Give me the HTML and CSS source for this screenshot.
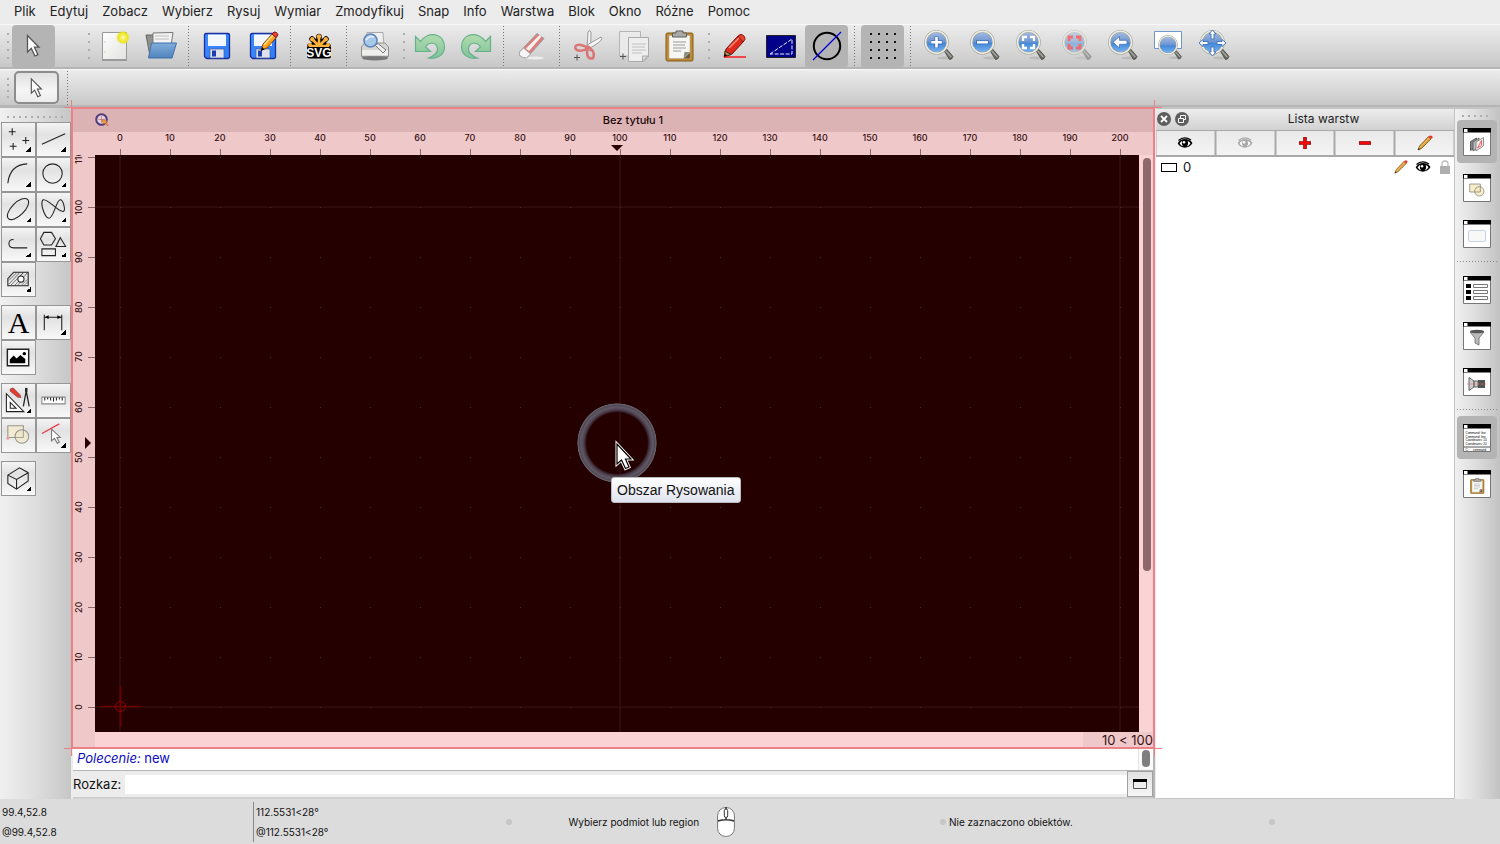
FILE: index.html
```html
<!DOCTYPE html>
<html lang="pl">
<head>
<meta charset="utf-8">
<title>Bez tytułu 1</title>
<link rel="stylesheet" href="styles.css">
</head>
<body>
<svg class="defs" aria-hidden="true">
  <defs>
    <linearGradient id="lens" x1="0" y1="0" x2="0" y2="1"><stop offset="0" stop-color="#a9bfe2"/><stop offset=".48" stop-color="#6d95d0"/><stop offset=".55" stop-color="#4488da"/><stop offset="1" stop-color="#7db8f2"/></linearGradient>
    <linearGradient id="disk" x1="0" y1="0" x2="1" y2="1"><stop offset="0" stop-color="#3f8cff"/><stop offset="1" stop-color="#2f7df2"/></linearGradient>
    <linearGradient id="folder" x1="0" y1="0" x2="0" y2="1"><stop offset="0" stop-color="#82aedb"/><stop offset="1" stop-color="#4f84bd"/></linearGradient>
    <linearGradient id="green" x1="0" y1="0" x2="0" y2="1"><stop offset="0" stop-color="#b2dcae"/><stop offset="1" stop-color="#7fc39b"/></linearGradient>
    <linearGradient id="paper" x1="0" y1="0" x2="1" y2="1"><stop offset="0" stop-color="#ffffff"/><stop offset="1" stop-color="#e2e2e0"/></linearGradient>
    <radialGradient id="glow"><stop offset="0" stop-color="#fffde0"/><stop offset=".3" stop-color="#f8f060"/><stop offset=".7" stop-color="#ece41c"/><stop offset="1" stop-color="#e8e030" stop-opacity="0"/></radialGradient>
    <symbol id="arrow" viewBox="2 0 32 32"><path d="M11.500 5.500V22l3.800-3.600 3.600 7.600 3-1.400-3.500-7.400h4.600z" fill="#fff" stroke="#555" stroke-width="1.300"/></symbol>
    <symbol id="glass" viewBox="0 0 32 32">
      <ellipse cx="22" cy="28" rx="8" ry="1.500" fill="#000" opacity=".1"/>
      <path d="M21 20.500l2.500-1.500 6.500 7.500-1.500 2.500-2 .5z" fill="#666862" stroke="#45473f" stroke-width=".8"/>
      <path d="M22.800 21l5.500 6" stroke="#a7a9a2" stroke-width="1.300"/>
      <circle cx="13.500" cy="12.300" r="11" fill="url(#lens)" stroke="#a2a39b" stroke-width="2.600"/>
      <circle cx="13.500" cy="12.300" r="11" fill="none" stroke="#edeee3" stroke-width="1.400"/>
    </symbol>
    <symbol id="eye" viewBox="0 0 16 12"><path d="M.7 6.300C3 1 12 .2 15.500 6 12.500 12 3.500 12.300.7 6.300z" fill="currentColor"/><path d="M2.600 6.500Q4 4.500 5.300 3.800 4 7.500 6.500 9.600 4 8.800 2.600 6.500zM13.500 6.300Q12 9 9.800 9.700 12 7 10.700 3.900 12.600 4.700 13.500 6.300z" fill="#fff"/><circle cx="7" cy="5.200" r="1.300" fill="#fff"/><path d="M1.500 3.500Q7-1.500 14 3" fill="none" stroke="currentColor" stroke-width="1.200"/></symbol>
    <symbol id="pencil" viewBox="0 0 16 16"><path d="M1 15l1.500-4L11.500 1.500l2.500 2.500-9.500 9.500z" fill="#d99836" stroke="#7b5a20" stroke-width=".8"/><path d="M3 12.500l9-9.300" stroke="#f5cb77" stroke-width="1"/><path d="M11.300 1.800Q13.500-.5 15 1t-1 3z" fill="#e83a30"/><path d="M1 15l.7-2 1.300 1.300z" fill="#222"/></symbol>
    <symbol id="clip" viewBox="0 0 32 32"><rect x="3" y="3" width="27" height="28" rx="1.500" fill="#c28a2c" stroke="#80591c"/><path d="M6 5.500h21v23H6z" fill="#f6f6f3" stroke="#aaa" stroke-width=".6"/><path d="M20.500 28.500l6.500-6.500h-5.500z" fill="#8c8c86"/><path d="M27 22.500v6h-6.500z" fill="#6f5a32"/><path d="M10 12h13M10 15h12M10 18h13M10 21h8" stroke="#b9b9b9" stroke-width="1.300"/><path d="M13 3V1h7v2h3.500v4h-14V3z" fill="#a9aaa3" stroke="#5f615b"/></symbol>
    <symbol id="win" viewBox="0 0 28 28"><path d="M.5.5h27v27H.5z" fill="#fff" stroke="#777"/><path d="M0 0h28v4.500H0z"/><path d="M1 1h3.500v3H1z" fill="#fff"/></symbol>
    <symbol id="shapes" viewBox="0 0 24 20"><path d="M1 1h16v12H1z" fill="#f6eeca" stroke="#777169"/><circle cx="15.500" cy="12" r="7" fill="#f4e9bd" fill-opacity=".8" stroke="#777169"/><path d="M17 5v8H9" fill="none" stroke="#777169" stroke-width=".8"/></symbol>
  </defs>
</svg>

<nav class="menu">
  <button>Plik</button><button>Edytuj</button><button>Zobacz</button><button>Wybierz</button><button>Rysuj</button><button>Wymiar</button><button>Zmodyfikuj</button><button>Snap</button><button>Info</button><button>Warstwa</button><button>Blok</button><button>Okno</button><button>Różne</button><button>Pomoc</button>
</nav>

<div class="toolbar">
  <i class="grip"></i>
  <button class="tool on" aria-label="Wskaźnik"><svg viewBox="0 0 32 32"><use href="#arrow" y="0" width="32" height="32"/></svg></button>
  <i class="grip apart"></i>
  <button class="tool" aria-label="Nowy"><svg viewBox="0 0 32 32"><path d="M3.500 2.500h24v27h-24z" fill="url(#paper)" stroke="#999"/><path d="M3 30.500h25" stroke="#777" opacity=".6"/><path d="M5.500 12h1M5.500 22h1" stroke="#aaa"/><circle cx="24" cy="7.500" r="7" fill="url(#glow)"/></svg></button>
  <button class="tool" aria-label="Otwórz"><svg viewBox="0 0 32 32"><path d="M1 5h8l2 2h14v19H5z" fill="#8f918c" stroke="#656762"/><path d="M8 3l20-.5-2 13H8z" fill="#f4f4f4" stroke="#777"/><path d="M10 6h14M10 9h14" stroke="#bbb"/><path d="M6.500 13h25l-4.500 15H3.500z" fill="url(#folder)" stroke="#3e71aa"/></svg></button>
  <i class="sep"></i>
  <button class="tool" aria-label="Zapisz"><svg viewBox="0 0 32 32"><path id="floppy" d="M5 3.500h22q1.500 0 1.500 1.500v22q0 1.500-1.500 1.500H5.500l-2-2V5q0-1.500 1.500-1.500z" fill="url(#disk)" stroke="#1b2f9e" stroke-width="1.300"/><path d="M7 4.500h18V16H7z" fill="#f3f8ff"/><path d="M9 19h14v9H9z" fill="#dfe2ea" stroke="#3c5aa8" stroke-width=".7"/><path d="M11 20.500h4v6h-4z" fill="#1c3fb0"/></svg></button>
  <button class="tool" aria-label="Zapisz jako"><svg viewBox="0 0 32 32"><use href="#floppy"/><path d="M7 4.500h18V16H7z" fill="#f3f8ff"/><path d="M9 19h14v9H9z" fill="#dfe2ea" stroke="#3c5aa8" stroke-width=".7"/><path d="M11 20.500h4v6h-4z" fill="#1c3fb0"/><path d="M14 20l2-6L26 3l4 3.500-10 11.500z" fill="#fba21e" stroke="#8a4510"/><path d="M17 15L27 4" stroke="#ffe28a" stroke-width="1.500"/><path d="M25 4l2-2q3-.5 4 3l-2 2.500z" fill="#e2492e" stroke="#812"/><path d="M14 21l1-4 2.500 2.500z"/></svg></button>
  <i class="sep"></i>
  <button class="tool" aria-label="Eksport SVG"><svg viewBox="0 0 32 32"><g stroke="#000" stroke-width="5.500" stroke-linecap="round"><path d="M16 16V6.500M16 16L9 9M16 16l7-7M16 16H7M16 16h9"/></g><g stroke="#ffb13b" stroke-width="2.600" stroke-linecap="round"><path d="M16 16V7M16 16L9.500 9.500M16 16l6.500-6.500M16 16H7.500M16 16h8.500"/></g><g fill="#ffb13b"><circle cx="16" cy="6.500" r="2.200"/><circle cx="9.200" cy="9.200" r="2.200"/><circle cx="22.800" cy="9.200" r="2.200"/><circle cx="7" cy="15" r="2"/><circle cx="25" cy="15" r="2"/></g><path d="M4 17h24v9q0 2.500-2.500 2.500h-19Q4 28.500 4 26z"/><text x="16" y="27" text-anchor="middle" class="svg-word">SVG</text></svg></button>
  <i class="sep"></i>
  <button class="tool" aria-label="Podgląd wydruku"><svg viewBox="0 0 32 32"><ellipse cx="16" cy="28" rx="13" ry="2.500" fill="#777"/><path d="M8 2.500h16l1 14H7z" fill="#eee" stroke="#aaa"/><path d="M2.500 17L6 13h20l3.500 4v9.500h-27z" fill="#d6d7d4" stroke="#8f908c"/><path d="M3 20h26v5H3z" fill="#efefed"/><path d="M8 27h16" stroke="#777"/><path d="M16 15l3-1.500 8 6.500-3 3z" fill="#eee" stroke="#777"/><circle cx="11.500" cy="10.500" r="6.500" fill="#a8c8e8" stroke="#6187ba" stroke-width="1.600"/><path d="M7 10q3-5 8-3" stroke="#e7f3ff" stroke-width="1.500" fill="none"/></svg></button>
  <i class="grip"></i>
  <button class="tool" aria-label="Cofnij"><svg viewBox="0 0 32 32"><path id="undo" d="M1.500 6.500v15h15l-5-4.500c3-5 11-5.500 12 1.500.5 4-3.500 7.500-9 9.500 9 1.500 16-3.500 16-11C30.500 3 14 .5 6.500 11.500z" fill="url(#green)" stroke="#66b18a" stroke-width="1.200"/></svg></button>
  <button class="tool" aria-label="Ponów"><svg viewBox="0 0 32 32"><use href="#undo" transform="matrix(-1 0 0 1 32 0)"/></svg></button>
  <i class="sep"></i>
  <button class="tool" aria-label="Usuń"><svg viewBox="0 0 32 32"><ellipse cx="19" cy="28" rx="9" ry="1.500" fill="#eee"/><path d="M3.500 22L21 3.500l7 5L11 27.500q-2 1-7.500-2z" fill="#e07e7e" stroke="#999"/><path d="M10 18.500L23.500 5l2 1.500L13 21z" fill="#f4f1ef"/><path d="M3.500 22l4-4 7 6-4 4q-5 0-7-3z" fill="#f5f5f4" stroke="#aaa"/></svg></button>
  <i class="sep"></i>
  <button class="tool" aria-label="Wytnij"><svg viewBox="0 0 32 32"><path d="M16 2l1-1.500 2 1.500-.5 19-3.500-2z" fill="#f5f5f5" stroke="#999"/><path d="M15 15L29 7l1 1.500q-.5 3-12 9.500z" fill="#f5f5f5" stroke="#999"/><g fill="none" stroke="#dc7676" stroke-width="2.600"><path d="M16 18C12 21 5 22 3.500 18.500S7 14 10.500 15.500 15 17.500 18 17"/><path d="M16 18c-2 4-1 10 2.500 10.500s4-4 2.500-7-4-3-4-5"/></g><path d="M2 27.500h6M5 24.500v6" stroke="#555"/></svg></button>
  <button class="tool" aria-label="Kopiuj"><svg viewBox="0 0 32 32"><path d="M1.500 1.500h21V26h-21z" fill="#eaeaea" stroke="#b5b5b5"/><path d="M10.500 7.500h20V27l-5 4.500h-15z" fill="#eee" stroke="#aaa"/><path d="M14 14h14M14 17h13M14 20h14M14 23h10" stroke="#c0c0c0"/><path d="M24.500 31v-5h5.500z" fill="#ddd" stroke="#aaa"/><path d="M2 26.500h6M5 23.500v6" stroke="#555"/></svg></button>
  <button class="tool" aria-label="Wklej"><svg viewBox="0 0 32 32"><use href="#clip" x="-1" width="32" height="32"/></svg></button>
  <i class="grip"></i>
  <button class="tool" aria-label="Pióro"><svg viewBox="0 0 32 32"><path d="M5 27l2-8L19 6l6 5-12 13z" fill="#e02a1c" stroke="#68130b"/><path d="M10 18L21 7" stroke="#ff8b7a" stroke-width="1.500"/><path d="M19 6l2-1.500q5 0 5 5L24 12z" fill="#e8462c" stroke="#811"/><path d="M6 21l6 3.500-6.500 2.500z" fill="#c08040" stroke="#333"/><path d="M5 27l.8-3 2.500 1.600z"/><path d="M5 27h22" stroke="red" stroke-width="1.300"/></svg></button>
  <button class="tool" aria-label="Szkic"><svg viewBox="0 0 32 32"><path d="M1.500 5.500h29v22h-29z" fill="#010189" stroke="#222"/><path d="M5 24L27 9v15z" fill="none" stroke="#eef" stroke-dasharray="4 1.500"/></svg></button>
  <button class="tool on" aria-label="Antyaliasing"><svg viewBox="0 0 32 32"><circle cx="16" cy="16" r="13.200" fill="none" stroke="#000" stroke-width="2"/><path d="M2 30L30 2" stroke="#00d" stroke-width="1.300"/></svg></button>
  <i class="sep"></i>
  <button class="tool on" aria-label="Siatka"><svg viewBox="0 0 32 32"><path d="M3 4h26M3 12h26M3 20h26M3 28h26" stroke="#111" stroke-width="2" stroke-dasharray="2 6"/></svg></button>
  <i class="sep"></i>
  <button class="tool" aria-label="Powiększ"><svg viewBox="0 0 32 32"><use href="#glass" width="32" height="32"/><path d="M13.500 6.500v11.500M8 12.300h11.500" stroke="#4170b5" stroke-width="4.200"/><path d="M13.500 7v10.500M8.300 12.300h10.500" stroke="#fff" stroke-width="2.600"/></svg></button>
  <button class="tool" aria-label="Pomniejsz"><svg viewBox="0 0 32 32"><use href="#glass" width="32" height="32"/><path d="M7 12.300h13" stroke="#4170b5" stroke-width="4"/><path d="M8 12.300h11" stroke="#fff" stroke-width="2.400"/></svg></button>
  <button class="tool" aria-label="Cały rysunek"><svg viewBox="0 0 32 32"><use href="#glass" width="32" height="32"/><path d="M8 11V7h4M15 7h4v4M19 14v4h-4M12 18H8v-4" fill="none" stroke="#fff" stroke-width="2.300"/></svg></button>
  <button class="tool dim" aria-label="Zaznaczenie"><svg viewBox="0 0 32 32"><use href="#glass" width="32" height="32"/><path d="M8 11V7h4M15 7h4v4M19 14v4h-4M12 18H8v-4" fill="none" stroke="#f00" stroke-width="2.800"/></svg></button>
  <button class="tool" aria-label="Poprzedni widok"><svg viewBox="0 0 32 32"><use href="#glass" width="32" height="32"/><path d="M6 12.300L12.500 6.500v3.800H20v4h-7.500V18z" fill="#fff" stroke="#4170b5" stroke-width=".8"/></svg></button>
  <button class="tool" aria-label="Okno powiększenia"><svg viewBox="0 0 32 32"><path d="M1.500 1.500h27v17h-27z" fill="#fff" stroke="#6e97cb"/><use href="#glass" x="4" y="5" width="26" height="26"/></svg></button>
  <button class="tool" aria-label="Przesuń widok"><svg viewBox="0 0 32 32"><use href="#glass" width="32" height="32"/><path d="M13.500 0l3.500 4h-2v5h-3V4h-2zM13.500 26l3.500-4h-2v-5h-3v5h-2zM0 13l4-3.500v2h5v3H4v2zM27 13l-4-3.500v2h-5v3h5v2z" fill="#fff" stroke="#4478bd" stroke-width="1"/></svg></button>
</div>

<div class="toolbar options">
  <i class="grip"></i>
  <button class="pick" aria-label="Zaznacz"><svg viewBox="0 0 32 32"><use href="#arrow" width="32" height="32"/></svg></button>
  <i class="sep"></i>
</div>

<main class="work">
  <aside class="palette">
    <i class="grip-h"></i>
    <div class="group">
      <button class="more" aria-label="Punkt"><svg viewBox="0 0 32 32"><path d="M6 8h7M9.500 4.500v7M20 17h7M23.500 13.500v7M7 23h7M10.500 19.500v7"/></svg></button>
      <button class="more" aria-label="Linia"><svg viewBox="0 0 32 32"><path d="M4 21L28 10"/></svg></button>
      <button class="more" aria-label="Łuk"><svg viewBox="0 0 32 32"><path d="M5 25Q7 6 25 5"/></svg></button>
      <button class="more" aria-label="Okrąg"><svg viewBox="0 0 32 32"><circle cx="15" cy="15" r="10"/></svg></button>
      <button class="more" aria-label="Elipsa"><svg viewBox="0 0 32 32"><ellipse cx="15.500" cy="15.500" rx="14" ry="6.500" transform="rotate(-45 15.500 15.500)"/></svg></button>
      <button class="more" aria-label="Splajn"><svg viewBox="0 0 32 32"><path d="M5 6C2 10 7 25 11.500 25C16 25 19 6 23 6C26 6 29 17 26 18C21 19 10 4 5 6"/></svg></button>
      <button class="more" aria-label="Polilinia"><svg viewBox="0 0 32 32"><path d="M11 11C5 10 4 19 11 19.500H25"/></svg></button>
      <button class="more" aria-label="Wielokąt"><svg viewBox="0 0 32 32"><path d="M6 3.500h8l4 6.500-4 6.500H6L2.500 10zM23 9l5.500 9h-10zM4 20.500h14v7H4z"/></svg></button>
      <button class="more" aria-label="Kreskowanie"><svg viewBox="0 0 32 32"><path d="M5 15l6-6.500h15v14H5z"/><path d="M6 21L17 9M6 17l8-8M8 22L21 9M12 22l4-4M17 13l4-4M15 22l3-3M19 22l6-6M22 22l4-4M22 13l3-4" stroke-width=".6"/><circle cx="18.500" cy="15.500" r="3.200" fill="#fff"/></svg></button>
    </div>
    <div class="group">
      <button aria-label="Tekst"><span class="letter">A</span></button>
      <button class="more" aria-label="Wymiarowanie"><svg viewBox="0 0 32 32"><path d="M6.500 8v16M24.500 8v16M7 10.500h17"/><path d="M7 10.500l4-2v4zM24 10.500l-4-2v4z" fill="#000" stroke="none"/></svg></button>
      <button aria-label="Obraz"><svg viewBox="0 0 32 32"><path d="M4.500 7.500h22v17h-22z" fill="#fff" stroke-width="1.500"/><path d="M7 22v-4l4-4 3 3 4-3.500 5 4V22z" fill="#000" stroke="none"/><circle cx="22" cy="12" r="1.800" fill="#000" stroke="none"/></svg></button>
    </div>
    <div class="group">
      <button class="more" aria-label="Modyfikuj"><svg viewBox="0 0 32 32"><path d="M3.500 9v18.500h18z" fill="#fff"/><path d="M7.500 18v6h6z"/><path d="M7.500 4l3-1 7 7 1 3-3.500-.5-7.500-6z" fill="#e53a2d" stroke="#844" stroke-width=".8"/><path d="M24 6l-3 16M24 6l3 16" stroke-width="1.300"/><path d="M24 3v4" stroke-width="2.500"/></svg></button>
      <button aria-label="Informacja"><svg viewBox="0 0 32 32"><path d="M4 12.500h24v7H4z" fill="#fff" stroke="#888"/><path d="M7 13v3M10 13v2M13 13v3M16 13v4M19 13v3M22 13v2M25 13v3"/></svg></button>
      <button aria-label="Blok"><svg viewBox="0 0 32 32" class="soft"><use href="#shapes" x="4" y="4" width="24" height="22"/><circle cx="5" cy="19" r="1.500" fill="#f77" stroke="none"/></svg></button>
      <button class="more" aria-label="Wybór"><svg viewBox="0 0 32 32"><path d="M4 14L22 4" stroke="#ee3b43" stroke-width="1.300"/><path d="M14 9.500v12l3-2.500 3 5 2-1-2.500-5h3.500z" fill="#fff" stroke="#777"/></svg></button>
    </div>
    <div class="group">
      <button class="more" aria-label="Izometria"><svg viewBox="0 0 32 32"><path d="M5 12.500L17 5l9 5v8.500L14 27 5 21zM5 12.500l9 4.500L26 10M14 17v10"/></svg></button>
    </div>
  </aside>

  <section class="center">
    <div class="drawing">
      <header class="doc-title"><svg viewBox="0 0 14 14"><circle cx="6.500" cy="6.500" r="5.300" fill="#e9cfd8" stroke="#4d3c7c" stroke-width="2"/><path d="M6.500 3v7M3 6.500h7" stroke="#b9808d" stroke-width=".8"/><path d="M6.500 6.500l2.500 5 1-1.500 2.500 3 1-1-2.500-3L12.500 8z" fill="#f29b35" stroke="#a75b35" stroke-width=".4"/></svg><h1>Bez tytułu 1</h1></header>
      <div class="sheet">
        <div class="corner"></div>
        <div class="ruler-x"><span>0</span><span>10</span><span>20</span><span>30</span><span>40</span><span>50</span><span>60</span><span>70</span><span>80</span><span>90</span><span>100</span><span>110</span><span>120</span><span>130</span><span>140</span><span>150</span><span>160</span><span>170</span><span>180</span><span>190</span><span>200</span><i class="mark-x"></i></div>
        <div class="ruler-y"><span>110</span><span>100</span><span>90</span><span>80</span><span>70</span><span>60</span><span>50</span><span>40</span><span>30</span><span>20</span><span>10</span><span>0</span><i class="mark-y"></i></div>
        <div class="canvas">
          <svg class="origin" viewBox="0 0 41 41"><path d="M0 20.500h41M20.500 0v41" stroke="#6c0000" stroke-width="1.600"/><circle cx="20.500" cy="20.500" r="5" fill="none" stroke="#9c0000"/></svg>
          <i class="halo"></i>
          <svg class="pointer" viewBox="0 0 18 30"><path d="M2 2v20l4.500-4 4 8.500 3.500-1.500-3.500-8h5.500z" fill="#fff" stroke="#fff" stroke-width="3"/><path d="M2 2v20l4.500-4 4 8.500 3.500-1.500-3.500-8h5.500z" fill="#fff" stroke="#000" stroke-width="1.200"/></svg>
          <div class="tooltip" role="tooltip">Obszar Rysowania</div>
        </div>
        <div class="track"><i class="thumb"></i></div>
        <div class="foot"></div>
        <output class="grid-size">10 &lt; 100</output>
      </div>
    </div>
    <div class="log"><p><em>Polecenie:</em> new</p><div class="log-track"><i></i></div></div>
    <div class="command"><label for="cmd">Rozkaz:</label><input id="cmd" type="text"><button aria-label="Okno poleceń"><svg viewBox="0 0 14 10"><path d="M.5.5h13v9H.5z" fill="#eee" stroke="#555"/><path d="M0 0h14v3H0z"/></svg></button></div>
  </section>

  <aside class="layers">
    <header>
      <button aria-label="Zamknij"><svg viewBox="0 0 14 14"><circle cx="7" cy="7" r="7" fill="#5e5e5e"/><path d="M4 4l6 6M10 4l-6 6" stroke="#fff" stroke-width="1.800"/></svg></button>
      <button aria-label="Odepnij"><svg viewBox="0 0 14 14"><circle cx="7" cy="7" r="7" fill="#5e5e5e"/><path d="M5.500 6V3.500h5v4H9M3.500 6.500h5v4h-5z" fill="none" stroke="#fff"/></svg></button>
      <h2>Lista warstw</h2>
    </header>
    <div class="layer-tools">
      <button aria-label="Pokaż wszystkie"><svg viewBox="0 0 16 12"><use href="#eye"/></svg></button>
      <button class="grey" aria-label="Ukryj wszystkie"><svg viewBox="0 0 16 12"><use href="#eye"/></svg></button>
      <button aria-label="Dodaj warstwę"><svg viewBox="0 0 16 12"><path d="M8 0v12M2 6h12" stroke="#7a1212" stroke-width="3.600"/><path d="M8 .5v11M2.500 6h11" stroke="#f00a0a" stroke-width="2.600"/></svg></button>
      <button aria-label="Usuń warstwę"><svg viewBox="0 0 16 12"><path d="M2 6h12" stroke="#7a1212" stroke-width="3.600"/><path d="M2.500 6h11" stroke="#f00a0a" stroke-width="2.600"/></svg></button>
      <button aria-label="Edytuj warstwę"><svg class="tall" viewBox="0 0 16 16"><use href="#pencil"/></svg></button>
    </div>
    <ul class="layer-list">
      <li><i class="swatch"></i><span>0</span><svg class="pen" viewBox="0 0 16 16"><use href="#pencil"/></svg><svg class="eye" viewBox="0 0 16 12"><use href="#eye"/></svg><svg class="lock" viewBox="0 0 10 14"><path d="M2 7V4q0-3 3-3t3 3v3" fill="none" stroke="#bbb" stroke-width="1.300"/><path d="M0 6h10v8H0z" fill="#afafaf"/></svg></li>
    </ul>
  </aside>

  <aside class="docks">
    <i class="grip-h"></i>
    <button class="on" aria-label="Lista warstw"><svg viewBox="0 0 28 28"><use href="#win"/><path d="M7.500 13.500l6-3.500v9l-6 3.500z" fill="#888" stroke="#444" stroke-width=".8"/><path d="M10 14l6-4v9.500l-6 3.500z" fill="#bbb" stroke="#555" stroke-width=".8"/><path d="M13 14l7.500-4.500v8.500L13 23z" fill="#f3eeee" stroke="#777" stroke-width=".8"/><path d="M14.500 20l4-7.500v5z" fill="none" stroke="#e44" stroke-width=".8"/></svg></button>
    <button aria-label="Lista bloków"><svg viewBox="0 0 28 28"><use href="#win"/><use href="#shapes" x="6" y="9" width="16" height="14"/></svg></button>
    <button aria-label="Biblioteka"><svg viewBox="0 0 28 28"><use href="#win"/><rect x="5.500" y="10.500" width="17" height="11" rx="1.500" fill="#f8f8f6" stroke="#c5d3e8"/></svg></button>
    <i class="sep-h"></i>
    <button aria-label="Właściwości"><svg viewBox="0 0 28 28"><use href="#win"/><path d="M3 8h5v4H3zM3 14h5v4H3zM3 20h5v4H3z"/><path d="M10.500 8.500h14v3h-14zM10.500 14.500h14v3h-14zM10.500 20.500h14v3h-14z" fill="#fff" stroke="#777"/></svg></button>
    <button aria-label="Filtr"><svg viewBox="0 0 28 28"><use href="#win"/><path d="M7 10l5 6v5l4 2v-7l5-6z" fill="#bbb" stroke="#666" stroke-width=".8"/><ellipse cx="14" cy="9.500" rx="7" ry="1.700" fill="#555"/></svg></button>
    <button aria-label="Podgląd"><svg viewBox="0 0 28 28"><use href="#win"/><path d="M6 9.500l5 3.500v6l-5 3.500zM11 13h4v6h-4z" fill="#ccc" stroke="#666"/><path d="M15 12h7v8h-7z" fill="#555"/><path d="M4 16h20" stroke="#f66" stroke-dasharray="2 1.500" opacity=".7"/></svg></button>
    <i class="sep-h"></i>
    <button class="on" aria-label="Wiersz poleceń"><svg viewBox="0 0 28 28"><use href="#win"/><g class="tiny"><text x="2.500" y="10">Command: line</text><text x="2.500" y="13.500">Command: line</text><text x="2.500" y="17">Coordinates: 10</text><text x="2.500" y="20.500">Coordinates: 20</text><text x="2.500" y="26.500">C:</text><text x="10" y="26.500">command</text></g><path d="M1 23h26" stroke="#555"/></svg></button>
    <button aria-label="Schowek"><svg viewBox="0 0 28 28"><use href="#win"/><use href="#clip" x="6" y="8" width="16" height="16"/></svg></button>
  </aside>
</main>

<footer class="status">
  <div class="coords"><span>99.4,52.8</span><span>@99.4,52.8</span></div>
  <div class="coords polar"><span>112.5531&lt;28°</span><span>@112.5531&lt;28°</span></div>
  <div class="hint"><i class="dot"></i><span>Wybierz podmiot lub region</span><svg viewBox="0 0 18 30"><rect x=".6" y=".6" width="16.800" height="28.800" rx="8" fill="#fff" stroke="#777"/><path d="M1 14Q9 11.500 17 14M9 0v2M9 10.500v2.500" fill="none" stroke="#333" stroke-width="1.500"/><rect x="7.300" y="2" width="3.400" height="8.500" rx="1.700" fill="#fff" stroke="#333"/></svg></div>
  <div class="state"><i class="dot"></i><span>Nie zaznaczono obiektów.</span></div>
  <div class="state"><i class="dot"></i></div>
</footer>
</body>
</html>
```
FILE: styles.css
```css
* { box-sizing: border-box; }
body {
  margin: 0;
  min-height: 100vh;
  display: flex;
  flex-direction: column;
  background: #ececec;
  color: #222;
  font: 13px/18px Inter, "Liberation Sans", sans-serif;
}
button { border: 0; padding: 0; margin: 0; background: none; color: inherit; font: inherit; }
h1, h2, p, ul { margin: 0; padding: 0; font-weight: 400; }
svg { display: block; }
.defs { position: absolute; width: 0; height: 0; }
.svg-word { font: bold 12px "Liberation Sans", sans-serif; fill: #fff; }

.menu { display: flex; gap: 14px; height: 24px; padding: 0 14px 2px; align-items: center; }

.toolbar {
  display: flex;
  align-items: center;
  gap: 3px;
  height: 45px;
  padding: 0 3px;
  background: linear-gradient(#ececec, #c8c8c8);
  border-top: 1px solid #f8f8f8;
  border-bottom: 2px solid #b5b5b5;
}
.grip {
  flex: none;
  width: 6px;
  height: 26px;
  background: repeating-linear-gradient(#adadad 0 2px, transparent 2px 8px) right / 2px 100% no-repeat;
}
.apart { margin-left: 26px; }
.sep {
  flex: none;
  width: 7px;
  height: 40px;
  background: repeating-linear-gradient(#777 0 1px, transparent 1px 3px) center / 1px 100% no-repeat;
}
.tool { flex: none; width: 43px; height: 43px; display: grid; place-items: center; border-radius: 4px; }
.tool svg { width: 32px; height: 32px; }
.on { background: #b4b4b4; }
.dim svg { opacity: .5; }
.options { height: 38px; }
.options .grip { height: 20px; background-image: repeating-linear-gradient(#adadad 0 2px, transparent 2px 6px); }
.options .sep { height: 34px; }
.pick {
  width: 45px;
  height: 33px;
  margin: 0 2px;
  display: grid;
  place-items: center;
  background: linear-gradient(#e0e0e0, #f5f5f5 60%, #ececec);
  border: 2px solid #8c8c8c;
  border-radius: 5px;
}
.pick svg { width: 28px; height: 28px; }

.work { flex: 1; display: grid; grid-template-columns: 71px minmax(0, 1fr) 300px 45px; }

.palette {
  display: flex;
  flex-direction: column;
  gap: 8px;
  padding: 9px 0 0 1px;
  background: linear-gradient(90deg, #f0f0f0, #dedede 50%, #c6c6c6);
  border-top: 1px solid #b5b5b5;
}
.grip-h {
  flex: none;
  width: 56px;
  height: 2px;
  margin: -1px 0 -4px 6px;
  background: repeating-linear-gradient(90deg, #adadad 0 2px, transparent 2px 6px);
}
.group { display: grid; grid-template-columns: 35px 35px; grid-auto-rows: 35px; }
.group button {
  position: relative;
  display: grid;
  place-items: center;
  background: linear-gradient(#f4f4f4, #e2e2e2 35%, #f8f8f8);
  border: 1px solid #969696;
}
.group svg { width: 31px; height: 31px; fill: none; stroke: #222; stroke-width: 1.1; }
.group .soft { opacity: .7; }
.more::after {
  content: "";
  position: absolute;
  right: 4px;
  bottom: 4px;
  width: 5px;
  height: 5px;
  background: linear-gradient(135deg, transparent 50%, #000 50%);
}
.letter { font: 30px/32px "Liberation Serif", serif; color: #000; }

.center { display: flex; flex-direction: column; min-width: 0; }
.drawing {
  position: relative;
  flex: 1;
  display: flex;
  flex-direction: column;
  border: 2px solid #ec8285;
}
.drawing::before, .drawing::after { content: ""; position: absolute; pointer-events: none; }
.drawing::before {
  inset: -9px -2px;
  border: solid #ec8285;
  border-width: 0 1px;
}
.drawing::after {
  inset: -2px -9px;
  border: solid #ec8285;
  border-width: 1px 0;
}
.doc-title { display: flex; align-items: center; height: 23px; padding: 0 22px 2px; background: #dbb3b4; color: #2d1517; }
.doc-title svg { width: 14px; height: 14px; }
.doc-title h1 { flex: 1; padding-left: 26px; text-align: center; font-size: 11px; font-weight: 500; line-height: 16px; color: #1d090b; }
.sheet {
  position: relative;
  flex: 1;
  display: grid;
  grid-template: 23px minmax(0, 1fr) 15px / 22px minmax(0, 1fr) 14px;
  background: #efc8ca;
  color: #381315;
  font-size: 9px;
  font-weight: 500;
  line-height: 12px;
}
.ruler-x { position: relative; grid-column: 2 / 4; display: flex; overflow: hidden; }
.ruler-x span {
  flex: none;
  width: 50px;
  text-align: center;
  background: linear-gradient(#8d686a, #8d686a) 25px 100% / 1px 6px no-repeat;
}
.mark-x {
  position: absolute;
  left: 516px;
  bottom: 4px;
  border: solid transparent;
  border-width: 6px 6px 0;
  border-top-color: #250000;
}
.ruler-y {
  position: relative;
  contain: size;
  display: flex;
  flex-direction: column;
  justify-content: flex-end;
  overflow: hidden;
}
.ruler-y span {
  flex: none;
  height: 50px;
  width: 22px;
  padding-left: 10px;
  writing-mode: vertical-rl;
  transform: rotate(180deg);
  text-align: center;
  background: linear-gradient(#8d686a, #8d686a) 0 24px / 7px 1px no-repeat;
}
.mark-y {
  position: absolute;
  right: 4px;
  top: 282px;
  border: solid transparent;
  border-width: 6px 0 6px 6px;
  border-left-color: #250000;
}
.canvas {
  position: relative;
  overflow: hidden;
  background:
    conic-gradient(from 90deg at 49px 49px, #4b2a2c 90deg, transparent 0) 26px calc(100% - 24px) / 50px 50px,
    linear-gradient(90deg, #300b0d 2px, transparent 0) 24px 0 / 500px 100%,
    linear-gradient(#300b0d 2px, transparent 0) 0 calc(100% + 474px) / 100% 500px,
    #250000;
}
.origin { position: absolute; left: 5px; bottom: 5px; width: 41px; height: 41px; }
.halo {
  position: absolute;
  left: 482px;
  top: 248px;
  width: 80px;
  height: 80px;
  border-radius: 50%;
  background: radial-gradient(closest-side, transparent 76%, #34202a 79%, #4d3f4b 83%, #5f5a66 90%, #514752 94%, #67636f 98%, transparent);
}
.pointer { position: absolute; left: 520px; top: 287px; width: 18px; height: 30px; overflow: visible; }
.tooltip {
  position: absolute;
  left: 516px;
  top: 322px;
  padding: 3px 5px;
  white-space: nowrap;
  font: 14px/18px "Liberation Sans", sans-serif;
  color: #111;
  background: linear-gradient(#fff, #dfe3ee);
  border: 1px solid #bbb;
  border-radius: 3px;
}
.track { background: #fad3d4; padding: 3px 2px 0 4px; }
.thumb { display: block; width: 8px; height: 72%; border-radius: 4px; background: #8e696b; }
.foot { grid-column: 2; background: linear-gradient(90deg, #fad3d4 calc(100% - 56px), #efc8ca 0); }
.grid-size { position: absolute; right: 0; bottom: 0; font-size: 13px; font-weight: 400; line-height: 14px; white-space: nowrap; }
.log {
  display: flex;
  justify-content: space-between;
  height: 22px;
  margin-left: 2px;
  background: #fff;
  border-bottom: 1px solid #b5b5b5;
  border-right: 2px solid #b5b5b5;
  color: #0a0ac0;
}
.log p { padding-left: 4px; }
.log-track { width: 15px; padding: 1px 0 0 3px; border-left: 1px solid #e5e5e5; background: #fafafa; }
.log-track i { display: block; width: 8px; height: 17px; border-radius: 4px; background: #7e7e7e; }
.command {
  display: flex;
  align-items: center;
  gap: 4px;
  height: 28px;
  margin-left: 2px;
  border-bottom: 2px solid #cfcfcf;
  border-right: 2px solid #b5b5b5;
  color: #111;
}
.command input { flex: 1; min-width: 0; height: 19px; margin-right: -4px; border: 0; padding: 0 4px; background: #fff; font: inherit; outline: 0; }
.command button { width: 26px; height: 26px; display: grid; place-items: center; border: 1px solid #a0a0a0; background: linear-gradient(#e2e2e2, #f5f5f5); }
.command svg { width: 14px; height: 10px; }

.layers { display: flex; flex-direction: column; margin-left: 1px; border: solid #c4c4c4; border-width: 2px 1px 1px 0; background: #fff; }
.layers header { display: flex; align-items: center; gap: 4px; height: 21px; padding: 0 0 2px 1px; background: linear-gradient(#ececec, #d2d2d2); }
.layers header svg { width: 14px; height: 14px; }
.layers h2 { flex: 1; text-align: center; font-size: 12px; line-height: 16px; }
.layer-tools { display: grid; grid-template-columns: repeat(5, 1fr); gap: 1px; height: 27px; padding: 1px 0 2px; background: #a9a9a9; }
.layer-tools button { display: grid; place-items: center; color: #000; background: linear-gradient(#e9e9e9, #f4f4f4); border: solid #ccc; border-width: 0 1px; }
.layer-tools svg { width: 16px; height: 12px; }
.layer-tools .tall { height: 16px; }
.layer-tools .grey { color: #aaa; }
.layer-list { list-style: none; }
.layer-list li { display: flex; align-items: center; height: 20px; padding: 0 4px 0 5px; color: #111; }
.swatch { width: 16px; height: 9px; border: 1px solid #000; margin-right: 6px; }
.pen { width: 14px; height: 14px; margin-left: auto; }
.eye { width: 16px; height: 12px; margin: 0 9px 0 7px; color: #000; }
.lock { width: 10px; height: 14px; }

.docks {
  display: flex;
  flex-direction: column;
  gap: 3px;
  padding: 8px 3px 0 2px;
  background: linear-gradient(90deg, #f0f0f0, #dedede 45%, #c2c2c2);
  border-top: 2px solid #c4c4c4;
}
.docks .grip-h { width: 28px; margin: -2px 0 0 5px; }
.docks button { flex: none; height: 43px; display: grid; place-items: center; border-radius: 4px; }
.docks svg { width: 28px; height: 28px; }
.sep-h { flex: none; height: 7px; background: repeating-linear-gradient(90deg, #888 0 1px, transparent 1px 3px) center / 100% 1px no-repeat; }
.tiny { font: 3px "Liberation Sans", sans-serif; }

.status {
  display: grid;
  grid-template-columns: 253fr 253fr 434fr 329fr 231fr;
  align-items: center;
  height: 45px;
  background: #dcdcdc;
  color: #111;
  font-size: 10px;
  line-height: 20px;
}
.coords { display: grid; padding-left: 2px; }
.polar { border-left: 1px solid #888; }
.hint { display: grid; grid-template-columns: 6px 19fr 18px 21fr; gap: 18px; align-items: center; }
.hint span { text-align: right; }
.hint svg { width: 18px; height: 30px; }
.state { display: flex; align-items: center; gap: 3px; }
.dot { width: 6px; height: 6px; border-radius: 50%; background: #c6c6c6; }
```
